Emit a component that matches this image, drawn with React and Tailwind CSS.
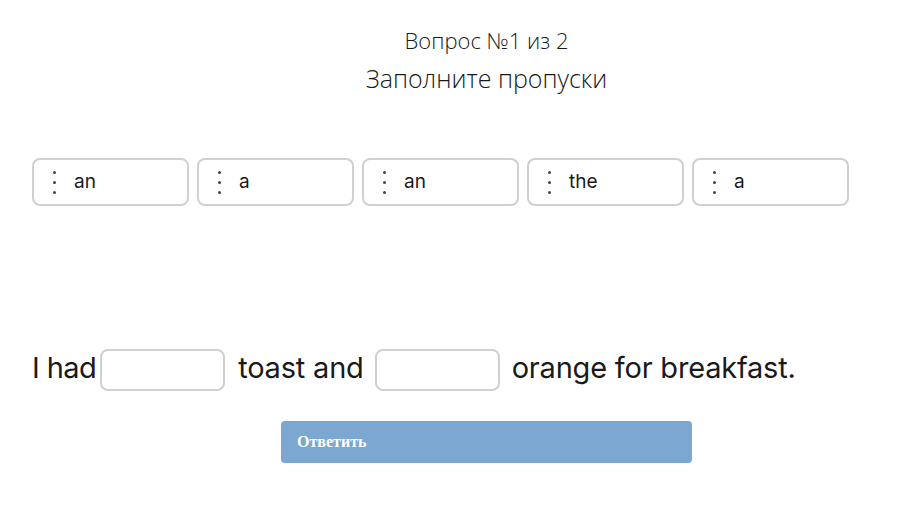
const words = ["an", "a", "an", "the", "a"];

const Blank = () => (
  <span className="inline-block w-[125px] h-[42px] border-2 border-[#d0d0d0] rounded-lg align-middle bg-white"></span>
);

// vertical three-dot drag handle
const Handle = () => (
  <span className="flex flex-col items-center gap-[7px] w-[6px]">
    <span className="w-[3px] h-[3px] rounded-full bg-[#444]"></span>
    <span className="w-[3px] h-[3px] rounded-full bg-[#444]"></span>
    <span className="w-[3px] h-[3px] rounded-full bg-[#444]"></span>
  </span>
);

const App = () => {
  return (
    <div className="min-h-screen bg-white text-[#1a1a1a]">
      {/* Header */}
      <div className="pl-[52px] pt-[22px] text-center font-['Open_Sans',sans-serif] font-light">
        <div className="text-[22px] leading-[36px]">Вопрос №1 из 2</div>
        <div className="text-[25px] leading-[40px]">Заполните пропуски</div>
      </div>

      {/* Word tiles */}
      <div className="flex gap-[8px] pl-[32px] mt-[60px] font-['Inter',sans-serif]">
        {words.map((w, i) => (
          <div
            key={i}
            className="w-[157px] h-[48px] border-2 border-[#d0d0d0] rounded-lg flex items-center pl-[17px] text-[19px]"
          >
            <Handle />
            <span className="ml-[17px]">{w}</span>
          </div>
        ))}
      </div>

      {/* Sentence */}
      <div className="pl-[32px] mt-[141px] font-['Inter',sans-serif] text-[29px] tracking-[-0.2px] flex items-center h-[42px]">
        <span className="tracking-[-0.6px]">I had</span>
        <span className="ml-[4px]"><Blank /></span>
        <span className="ml-[13px]">toast and</span>
        <span className="ml-[11px]"><Blank /></span>
        <span className="ml-[12px]">orange for breakfast.</span>
      </div>

      {/* Button */}
      <div className="pl-[281px] mt-[32px]">
        <button className="w-[411px] h-[42px] bg-[#7ba7d0] rounded-[4px] text-left pl-[16px] text-white font-['Liberation_Serif',serif] font-bold text-[16px]">
          Ответить
        </button>
      </div>
    </div>
  );
};

export default App;
